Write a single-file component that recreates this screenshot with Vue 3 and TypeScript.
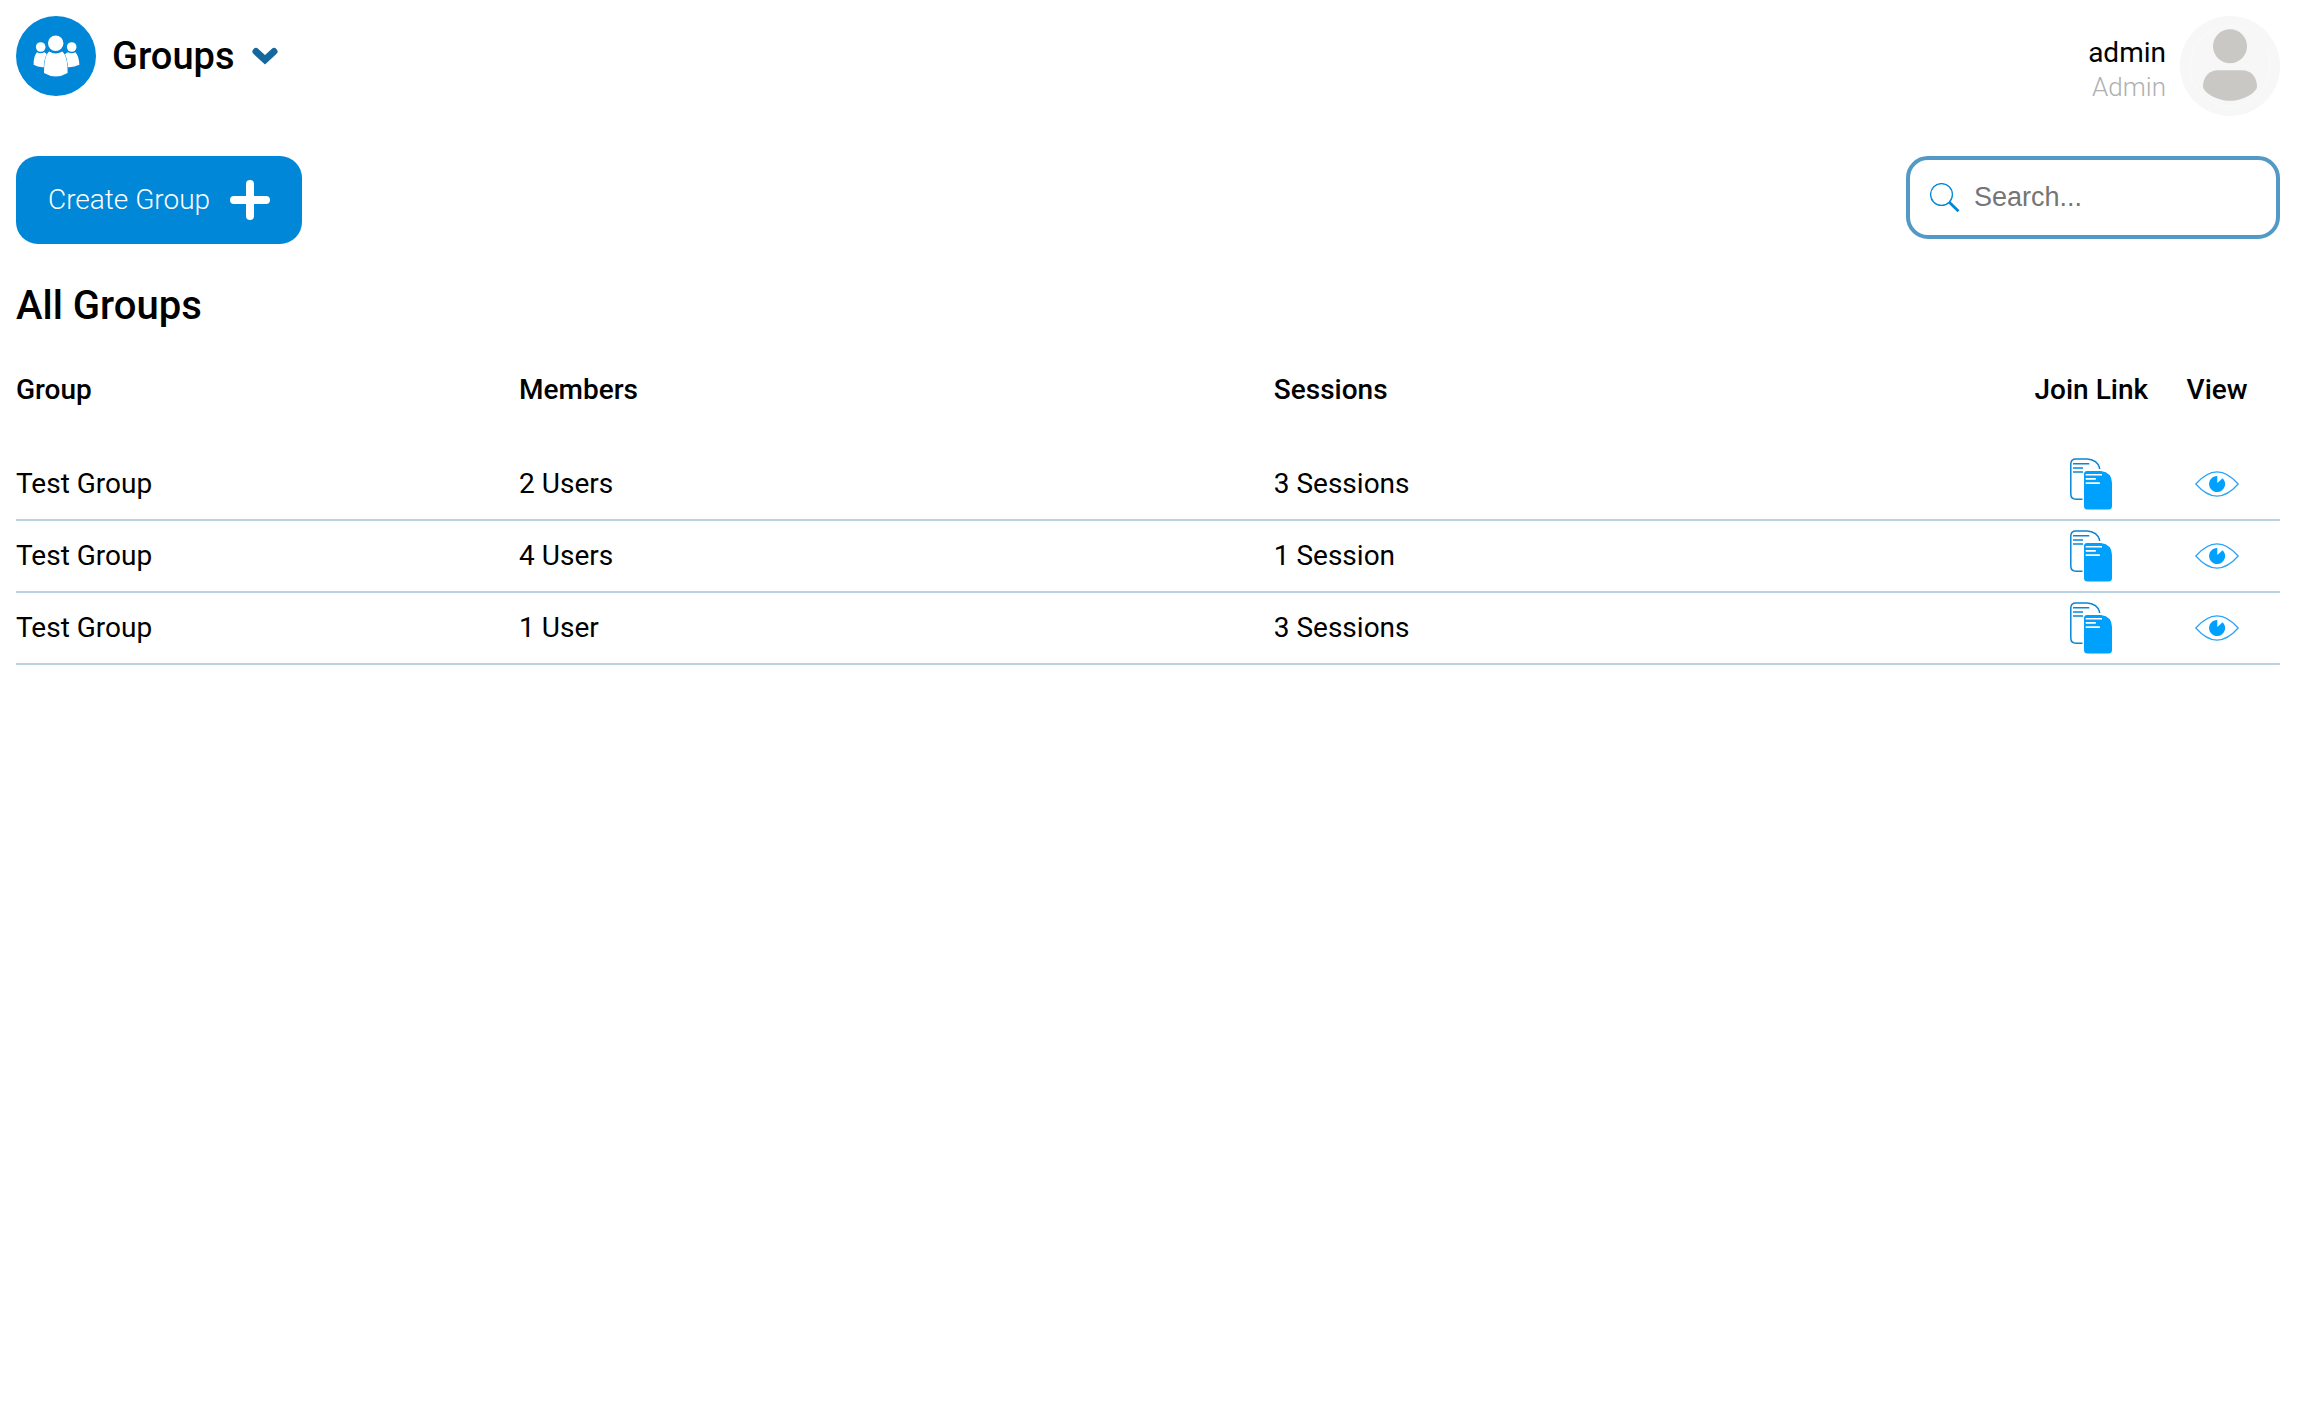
<script setup lang="ts">
import { ref, computed } from 'vue'

interface Group {
  id: number
  name: string
  members: number
  sessions: number
}

const groups: Group[] = [
  { id: 1, name: 'Test Group', members: 2, sessions: 3 },
  { id: 2, name: 'Test Group', members: 4, sessions: 1 },
  { id: 3, name: 'Test Group', members: 1, sessions: 3 },
]

const query = ref('')

const visibleGroups = computed(() =>
  groups.filter((g) => g.name.toLowerCase().includes(query.value.toLowerCase())),
)

const plural = (n: number, word: string): string => `${n} ${word}${n === 1 ? '' : 's'}`
</script>

<template>
  <div class="page">
    <header class="topbar">
      <button class="switcher" type="button" aria-haspopup="menu">
        <svg class="logo" viewBox="0 0 80 80" aria-hidden="true">
          <circle cx="40" cy="40" r="40" fill="#0087d8" />
          <g fill="#fff">
            <circle cx="24.7" cy="31" r="4.8" />
            <circle cx="55.7" cy="31" r="4.8" />
            <path d="M21 36.2Q24.7 38.2 28.4 36.2Q30 37 31 38.6Q28.2 43 28 51.2Q22 51.6 17.6 48.8Q17.6 39.5 21 36.2Z" />
            <path d="M59.4 36.2Q55.7 38.2 52 36.2Q50 37 48.8 38.6Q51.4 43 51.6 51.2Q58 51.6 63.4 48.8Q62.8 39.5 59.4 36.2Z" />
            <path
              d="M33.2 35.6Q39.7 39.6 46.2 35.6Q51.6 39.5 51.6 57Q46 60.4 39.8 60.4Q33.6 60.4 28 57Q28 39.5 33.2 35.6Z"
              stroke="#0087d8"
              stroke-width="0.6"
              paint-order="stroke"
            />
            <circle cx="39.7" cy="27.3" r="7.7" />
          </g>
        </svg>
        <span class="title">Groups</span>
        <svg class="chevron" viewBox="-2 0 28 18" aria-hidden="true">
          <path d="M4 4.5L13 12.8L22 4.5" fill="none" stroke="#15689d" stroke-width="7" stroke-linecap="round" />
        </svg>
      </button>

      <div class="user">
        <div class="user-text">
          <span class="user-name">admin</span>
          <span class="user-role">Admin</span>
        </div>
        <svg class="avatar" viewBox="0 0 100 100" role="img" aria-label="admin">
          <circle cx="50" cy="50" r="50" fill="#f7f7f7" />
          <circle cx="50" cy="50" r="40" fill="none" stroke="#fbfbfb" stroke-width="1" />
          <circle cx="50" cy="30.2" r="17" fill="#c9c8c4" />
          <path d="M38 54.3H62C71 54.3 77 61 77 70.5C77 76 64 84.8 50 84.8C36 84.8 23 76 23 70.5C23 61 29 54.3 38 54.3Z" fill="#c9c8c4" />
        </svg>
      </div>
    </header>

    <div class="toolbar">
      <button class="create" type="button">
        <span>Create Group</span>
        <svg class="plus" viewBox="0 0 40 40" aria-hidden="true">
          <path d="M20 4V36M4 20H36" stroke="#fff" stroke-width="8" stroke-linecap="round" />
        </svg>
      </button>

      <label class="search">
        <svg class="search-icon" viewBox="0 0 30 30" aria-hidden="true">
          <circle cx="11.5" cy="11.5" r="10.9" fill="none" stroke="#0087d8" stroke-width="1.3" />
          <path d="M19.3 19.3L28.5 28.3" stroke="#0087d8" stroke-width="2.8" />
        </svg>
        <input v-model="query" type="text" placeholder="Search..." aria-label="Search groups" />
      </label>
    </div>

    <h2 class="heading">All Groups</h2>

    <table class="groups">
      <thead>
        <tr>
          <th scope="col">Group</th>
          <th scope="col">Members</th>
          <th scope="col">Sessions</th>
          <th scope="col" class="action">Join Link</th>
          <th scope="col" class="action">View</th>
        </tr>
      </thead>
      <tbody>
        <tr v-for="group in visibleGroups" :key="group.id">
          <td>{{ group.name }}</td>
          <td>{{ plural(group.members, 'User') }}</td>
          <td>{{ plural(group.sessions, 'Session') }}</td>
          <td class="action">
            <button class="icon-button" type="button" aria-label="Copy join link">
              <svg class="copy" viewBox="0 0 42 52" aria-hidden="true">
                <path
                  d="M12.5 41.2H6Q.8 41.2 .8 36V6Q.8 .9 6 .9H17C23 .9 29 5 29.6 11M3 5.7H19.3M3 9.9H13M3 14.1H13"
                  fill="none"
                  stroke="#0a86d6"
                  stroke-width="1.5"
                />
                <path d="M17 13H31Q42 14.5 42 25V48Q42 51.6 38.5 51.6H17.5Q14 51.6 14 48V16Q14 13 17 13Z" fill="#00a0ff" />
                <path d="M15.7 16.7H32M15.7 20.9H25.8M15.7 25.1H29.8" fill="none" stroke="#fff" stroke-width="1.6" />
              </svg>
            </button>
          </td>
          <td class="action">
            <button class="icon-button" type="button" aria-label="View group">
              <svg class="eye" viewBox="0 0 44 26" aria-hidden="true">
                <path
                  d="M.8 13C7 6 14 .9 22 .9S37 6 43.2 13C37 20 30 25.1 22 25.1S7 20 .8 13Z"
                  fill="none"
                  stroke="#2ba3f7"
                  stroke-width="1.2"
                />
                <path d="M22.3 12V5A8 8 0 1 0 27.6 7.2Z" fill="#00a0ff" />
              </svg>
            </button>
          </td>
        </tr>
      </tbody>
    </table>
  </div>
</template>

<style>
body {
  margin: 0;
  background: #fff;
}
</style>

<style scoped>
.page {
  padding: 16px 18px 16px 16px;
  font-family: Roboto, "Liberation Sans", sans-serif;
  font-size: 28px;
  line-height: 34px;
  color: #000;
}

button {
  padding: 0;
  border: 0;
  background: none;
  color: inherit;
  font: inherit;
  cursor: pointer;
}

svg {
  display: block;
  flex: none;
}

.topbar {
  display: flex;
  justify-content: space-between;
  align-items: flex-start;
}

.switcher {
  display: flex;
  align-items: center;
  gap: 16px;
}

.logo {
  width: 80px;
  height: 80px;
}

.title {
  font-size: 38px;
  font-weight: 500;
}

.chevron {
  width: 28px;
  height: 18px;
}

.user {
  display: flex;
  align-items: center;
  gap: 14px;
}

.user-text {
  display: flex;
  flex-direction: column;
  align-items: flex-end;
  padding-top: 8px;
}

.user-role {
  color: #b0b0b0;
  font-size: 26px;
  font-weight: 300;
}

.avatar {
  width: 100px;
  height: 100px;
}

.toolbar {
  display: flex;
  justify-content: space-between;
  align-items: flex-start;
  margin-top: 40px;
}

.create {
  display: flex;
  align-items: center;
  gap: 20px;
  padding: 24px 32px;
  border-radius: 22px;
  background: #0087d8;
  color: #fff;
  font-weight: 300;
}

.plus {
  width: 40px;
  height: 40px;
}

.search {
  display: flex;
  align-items: center;
  gap: 14px;
  padding: 20px;
  border: 4px solid #5299c5;
  border-radius: 22px;
}

.search-icon {
  width: 30px;
  height: 30px;
}

.search input {
  width: 282px;
  height: 35px;
  padding: 0;
  border: 0;
  outline: 0;
  background: none;
  font: 27px "Liberation Sans", Arial, sans-serif;
}

.search input::placeholder {
  color: #757575;
}

.heading {
  margin: 38px 0 0;
  font-size: 40px;
  font-weight: 500;
  line-height: 48px;
}

.groups {
  display: block;
  margin-top: 43px;
}

.groups thead,
.groups tbody {
  display: block;
}

.groups tr {
  display: grid;
  grid-template-columns: 4fr 6fr 6fr 1fr 1fr;
  align-items: center;
}

.groups tbody {
  margin-top: 42px;
}

.groups tbody tr {
  height: 70px;
  border-bottom: 2px solid #bad3e2;
}

.groups th,
.groups td {
  padding: 0;
  text-align: left;
}

.groups th {
  font-weight: 500;
}

.groups .action {
  display: flex;
  justify-content: center;
  white-space: nowrap;
}

.copy {
  width: 42px;
  height: 52px;
}

.eye {
  width: 44px;
  height: 26px;
}
</style>
